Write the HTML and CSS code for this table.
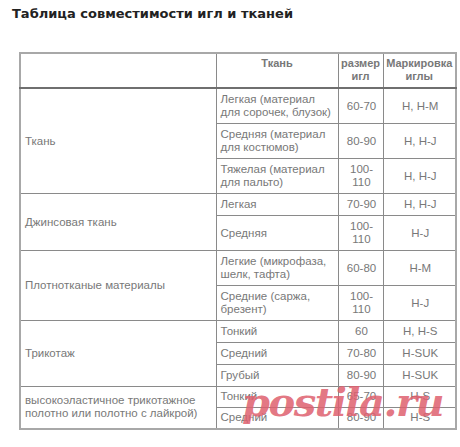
FILE: index.html
```html
<!DOCTYPE html>
<html lang="ru">
<head>
<meta charset="utf-8">
<link rel="stylesheet" href="styles.css">
</head>
<body>
<div class="page">
  <h1 class="title">Таблица совместимости игл и тканей</h1>
  <table class="tbl">
    <colgroup>
      <col class="c1"><col class="c2"><col class="c3"><col class="c4">
    </colgroup>
    <tr class="head">
      <th></th>
      <th>Ткань</th>
      <th>размер игл</th>
      <th>Маркировка иглы</th>
    </tr>
    <tr>
      <td class="name" rowspan="3">Ткань</td>
      <td class="sub">Легкая (материал для сорочек, блузок)</td>
      <td class="num">60-70</td>
      <td class="mark">H, H-M</td>
    </tr>
    <tr>
      <td class="sub">Средняя (материал для костюмов)</td>
      <td class="num">80-90</td>
      <td class="mark">H, H-J</td>
    </tr>
    <tr>
      <td class="sub">Тяжелая (материал для пальто)</td>
      <td class="num">100-<br>110</td>
      <td class="mark">H, H-J</td>
    </tr>
    <tr>
      <td class="name" rowspan="2">Джинсовая ткань</td>
      <td class="sub">Легкая</td>
      <td class="num">70-90</td>
      <td class="mark">H, H-J</td>
    </tr>
    <tr>
      <td class="sub">Средняя</td>
      <td class="num">100-<br>110</td>
      <td class="mark">H-J</td>
    </tr>
    <tr>
      <td class="name" rowspan="2">Плотнотканые материалы</td>
      <td class="sub">Легкие (микрофаза, шелк, тафта)</td>
      <td class="num">60-80</td>
      <td class="mark">H-M</td>
    </tr>
    <tr>
      <td class="sub">Средние (саржа, брезент)</td>
      <td class="num">100-<br>110</td>
      <td class="mark">H-J</td>
    </tr>
    <tr>
      <td class="name" rowspan="3">Трикотаж</td>
      <td class="sub">Тонкий</td>
      <td class="num">60</td>
      <td class="mark">H, H-S</td>
    </tr>
    <tr>
      <td class="sub">Средний</td>
      <td class="num">70-80</td>
      <td class="mark">H-SUK</td>
    </tr>
    <tr>
      <td class="sub">Грубый</td>
      <td class="num">80-90</td>
      <td class="mark">H-SUK</td>
    </tr>
    <tr class="last">
      <td class="name" rowspan="2">высокоэластичное трикотажное полотно или полотно с лайкрой)</td>
      <td class="sub">Тонкий</td>
      <td class="num">65-70</td>
      <td class="mark">H-S</td>
    </tr>
    <tr class="last">
      <td class="sub">Средний</td>
      <td class="num">80-90</td>
      <td class="mark">H-S</td>
    </tr>
  </table>
  <div class="watermark">postila.ru</div>
</div>
</body>
</html>
```

FILE: styles.css
```css
html, body {
  margin: 0;
  padding: 0;
  background: #ffffff;
}
.page {
  position: relative;
  width: 460px;
  height: 447px;
  overflow: hidden;
}
.title {
  margin: 0;
  padding: 5px 0 0 12px;
  font-family: "DejaVu Sans", Verdana, sans-serif;
  font-weight: bold;
  font-size: 13px;
  line-height: 18px;
  color: #222222;
}
.tbl {
  margin: 29px 0 0 19px;
  width: 436px;
  table-layout: fixed;
  border-collapse: collapse;
  border: 2px solid #a8a8a8;
  font-family: "Liberation Sans", Arial, sans-serif;
  font-size: 11.5px;
  line-height: 13px;
  color: #787878;
}
.c1 { width: 196px; }
.c2 { width: 122px; }
.c3 { width: 45px; }
.c4 { width: 73px; }
.tbl th, .tbl td {
  border: 1px solid #8a8a8a;
  padding: 4px 2px 4px 4px;
  vertical-align: middle;
}
.head th {
  height: 27px;
  vertical-align: top;
  text-align: center;
  font-weight: bold;
  padding: 3px 0 3px 0;
  font-size: 11px;
  border-bottom: 2px solid #6f6f6f;
}
.last td { padding-top: 3px; padding-bottom: 4px; }
.name { text-align: left; }
.sub { text-align: left; }
.num, .mark { text-align: center; padding-left: 1px; padding-right: 1px; }
.watermark {
  position: absolute;
  left: 242px;
  top: 374px;
  font-family: "DejaVu Serif", "Liberation Serif", serif;
  font-weight: bold;
  font-style: italic;
  font-size: 40px;
  line-height: 56px;
  letter-spacing: -1.5px;
  color: rgba(222, 96, 110, 0.85);
}
```
